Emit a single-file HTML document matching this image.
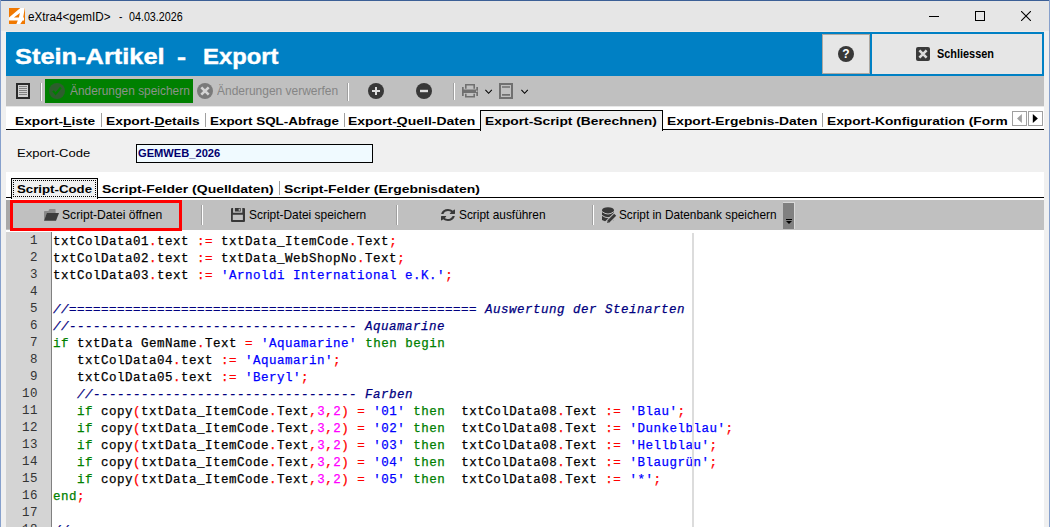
<!DOCTYPE html>
<html><head><meta charset="utf-8"><style>
html,body{margin:0;padding:0;}
body{width:1050px;height:527px;position:relative;overflow:hidden;background:#f0f0f0;font-family:"Liberation Sans",sans-serif;}
.a{position:absolute;box-sizing:border-box;}
.tx{position:absolute;white-space:pre;line-height:1;transform-origin:0 0;}
.tx u{text-decoration:underline;text-underline-offset:1px;}
.code{position:absolute;left:53px;white-space:pre;font-family:"Liberation Mono",monospace;font-size:12.5px;letter-spacing:0.5px;line-height:17px;color:#000;-webkit-text-stroke:0.25px currentColor;}
.ln{position:absolute;left:6px;width:32px;text-align:right;white-space:pre;font-family:"Liberation Mono",monospace;font-size:12.5px;letter-spacing:0.5px;line-height:17px;color:#333;}
.p{color:#ff0000}
.s{color:#0000ff}
.c{color:#000080;font-style:italic}
.k{color:#008000}
.n{color:#ff00ff}

</style></head><body>
<!-- window border -->
<div class="a" style="left:0;top:0;width:1050px;height:1px;background:#3b5f96"></div>
<div class="a" style="left:0;top:0;width:1px;height:527px;background:#86a0cc"></div>
<div class="a" style="left:1049px;top:0;width:1px;height:527px;background:#86a0cc"></div>
<!-- title bar -->
<div class="a" style="left:1px;top:1px;width:1048px;height:30px;background:#e6e6e6"></div>
<svg class="a" style="left:9px;top:8px" width="16" height="16" viewBox="0 0 16 16"><rect width="16" height="16" fill="#f07800"/><path fill="#fff" fill-rule="evenodd" d="M0,9.4 L11.3,0 L15.8,0 L14.2,9.4 L15,9.4 L15,12.6 L13.6,12.6 L11.3,16 L7.4,16 L8.8,12.6 L0,12.6 Z M4.9,9.4 L10.9,4.9 L9.9,9.4 Z"/></svg>
<div class="a" style="left:929px;top:16px;width:10px;height:1px;background:#000"></div>
<div class="a" style="left:975px;top:11px;width:10px;height:10px;border:1px solid #000"></div>
<svg class="a" style="left:1021px;top:11px" width="10" height="10" viewBox="0 0 10 10"><path d="M0,0 L10,10 M10,0 L0,10" stroke="#000" stroke-width="1.1"/></svg>
<!-- header -->
<div class="a" style="left:6px;top:31px;width:1038px;height:1px;background:#f0eae7"></div>
<div class="a" style="left:6px;top:32px;width:1038px;height:44px;background:#0080c4"></div>
<div class="a" style="left:822px;top:34px;width:48px;height:40px;background:#e6e6e6;border:1px solid #b0a8a0"></div>
<svg class="a" style="left:838px;top:46px" width="16" height="16" viewBox="0 0 16 16"><circle cx="8" cy="8" r="8" fill="#383838"/><text x="8" y="12.3" text-anchor="middle" font-family="Liberation Sans" font-weight="bold" font-size="12" fill="#fff">?</text></svg>
<div class="a" style="left:870px;top:32px;width:174px;height:44px;background:#e6e6e6;border:2px solid #0080c4"></div>
<svg class="a" style="left:916px;top:47px" width="14" height="14" viewBox="0 0 14 14"><rect width="14" height="14" rx="2" fill="#3a3a3a"/><path d="M3.4,3.4 L10.6,10.6 M10.6,3.4 L3.4,10.6" stroke="#dcdcdc" stroke-width="2.6"/></svg>
<!-- toolbar -->
<div class="a" style="left:6px;top:76px;width:1038px;height:30px;background:#c0c0c0"></div>
<div class="a" style="left:6px;top:106px;width:1038px;height:1px;background:#e8e8e8"></div>
<div class="a" style="left:16px;top:83px;width:14px;height:16px;border:2px solid #2a2a2a;background:#d0d0d0"></div>
<svg class="a" style="left:18px;top:85px" width="10" height="12" viewBox="0 0 10 12"><path d="M1,1.5H9M1,3.5H9M1,5.5H9M1,7.5H9M1,9.5H9" stroke="#787878" stroke-width="0.9"/></svg>
<div class="a" style="left:40px;top:83px;width:1px;height:18px;background:#a0a0a0"></div>
<div class="a" style="left:41px;top:83px;width:1px;height:18px;background:#fff"></div>
<div class="a" style="left:45px;top:79px;width:148px;height:24px;background:#008000"></div>
<svg class="a" style="left:49px;top:83px" width="16" height="16" viewBox="0 0 16 16"><circle cx="8" cy="8" r="8" fill="#2d5e2d"/><path d="M4.1,7.9 L6.6,10.9 L11.9,4.5" stroke="#008000" stroke-width="2.2" fill="none"/></svg>
<svg class="a" style="left:197px;top:83px" width="16" height="16" viewBox="0 0 16 16"><circle cx="8" cy="8" r="8" fill="#7a7a7a"/><path d="M4.3,4.3 L11.7,11.7 M11.7,4.3 L4.3,11.7" stroke="#d4d4d4" stroke-width="2.6"/></svg>
<div class="a" style="left:347px;top:83px;width:1px;height:18px;background:#a0a0a0"></div>
<div class="a" style="left:348px;top:83px;width:1px;height:18px;background:#fff"></div>
<svg class="a" style="left:368px;top:83px" width="16" height="16" viewBox="0 0 16 16"><circle cx="8" cy="8" r="8" fill="#383838"/><path d="M8,4V12M4,8H12" stroke="#dcdcdc" stroke-width="2"/></svg>
<svg class="a" style="left:416px;top:83px" width="16" height="16" viewBox="0 0 16 16"><circle cx="8" cy="8" r="8" fill="#383838"/><path d="M4,8H12" stroke="#dcdcdc" stroke-width="2.4"/></svg>
<div class="a" style="left:453px;top:83px;width:1px;height:17px;background:#a0a0a0"></div>
<div class="a" style="left:454px;top:83px;width:1px;height:17px;background:#fff"></div>
<svg class="a" style="left:462px;top:84px" width="16" height="14" viewBox="0 0 16 14"><path fill="#707070" d="M3,0H13V4.8H11.4V1.6H4.6V4.8H3Z M0,3H1.7V12H0Z M14.3,3H16V12H14.3Z M0,5.5H16V9H0Z M3,9.7H4.6V12H11.4V9.7H13V13.6H3Z"/><rect x="14.2" y="6.6" width="1.2" height="1.2" fill="#e0e0e0"/></svg>
<svg class="a" style="left:485px;top:89px" width="8" height="6" viewBox="0 0 8 6"><path d="M0.4,0.9 L3.6,4.3 L6.8,0.9" stroke="#000" stroke-width="1.05" fill="none"/></svg>
<svg class="a" style="left:499px;top:83px" width="14" height="16" viewBox="0 0 14 16"><path fill="#707070" fill-rule="evenodd" d="M0,0H14V16H0Z M2,2V14H12V2Z M3,3.2H11V4.8H3Z M3,11.1H11V12.7H3Z"/></svg>
<svg class="a" style="left:521px;top:89px" width="8" height="6" viewBox="0 0 8 6"><path d="M0.4,0.9 L3.6,4.3 L6.8,0.9" stroke="#000" stroke-width="1.05" fill="none"/></svg>
<!-- tab strip -->
<div class="a" style="left:6px;top:107px;width:1038px;height:23px;background:#fff"></div>
<div class="a" style="left:6px;top:129px;width:1038px;height:1px;background:#000"></div>
<div class="a" style="left:101px;top:113px;width:1px;height:14px;background:#a0a0a0"></div>
<div class="a" style="left:205px;top:113px;width:1px;height:14px;background:#a0a0a0"></div>
<div class="a" style="left:344px;top:113px;width:1px;height:14px;background:#a0a0a0"></div>
<div class="a" style="left:822px;top:113px;width:1px;height:14px;background:#a0a0a0"></div>
<div class="a" style="left:480px;top:110px;width:183px;height:21px;background:#f0f0f0;border:1px solid #000;border-bottom:none"></div>
<div class="a" style="left:1012px;top:111px;width:15px;height:15px;background:#fff;border:1px solid #a0a0a0"></div>
<div class="a" style="left:1028px;top:111px;width:15px;height:15px;background:#fff;border:1px solid #a0a0a0"></div>
<svg class="a" style="left:1012px;top:111px" width="15" height="15" viewBox="0 0 15 15"><path d="M9.9,3 L5,7.5 L9.9,12Z" fill="#a0a0a0"/></svg>
<svg class="a" style="left:1028px;top:111px" width="15" height="15" viewBox="0 0 15 15"><path d="M4.8,3 L9.9,7.5 L4.8,12Z" fill="#000"/></svg>
<!-- export code -->
<div class="a" style="left:136px;top:144px;width:237px;height:19px;background:#f0faff;border:1px solid #000"></div>
<!-- subtabs -->
<div class="a" style="left:6px;top:172px;width:1038px;height:28px;background:#fff"></div>
<div class="a" style="left:6px;top:197px;width:1038px;height:1px;background:#000"></div>
<div class="a" style="left:11px;top:178px;width:87px;height:21px;background:#f0f0f0;border:1px solid #000;border-bottom:none"></div>
<div class="a" style="left:13px;top:180px;width:83px;height:17px;border:1px dotted #000"></div>
<div class="a" style="left:279px;top:181px;width:1px;height:14px;background:#a0a0a0"></div>
<!-- button toolbar -->
<div class="a" style="left:6px;top:200px;width:1038px;height:30px;background:#c0c0c0"></div>
<div class="a" style="left:6px;top:200px;width:4px;height:29px;background:#a8a8a8"></div>
<div class="a" style="left:10px;top:200px;width:172px;height:31px;border:3px solid #ff0000;z-index:5"></div>
<svg class="a" style="left:44px;top:209px" width="15" height="12" viewBox="0 0 15 12"><path fill="#8a8a8a" d="M0,2.5 Q0,2 1,2 H4.5 L5,0.5 Q5.3,0 6,0 H11 Q11.6,0 11.6,0.8 V4 H3 L0,11.5Z"/><path fill="#3c3c3c" d="M2.8,4 H15 L12,11.8 H0Z"/></svg>
<div class="a" style="left:201px;top:205px;width:1px;height:20px;background:#a0a0a0"></div>
<div class="a" style="left:202px;top:205px;width:1px;height:20px;background:#fff"></div>
<svg class="a" style="left:231px;top:208px" width="14" height="14" viewBox="0 0 14 14"><path fill="#383838" fill-rule="evenodd" d="M1,0 H2.1 V4.8 H11.3 V0 H13 Q14,0 14,1 V13 Q14,14 13,14 H1 Q0,14 0,13 V1 Q0,0 1,0Z M1.8,6.7 V12 H11.9 V6.7Z"/><path fill="#383838" fill-rule="evenodd" d="M3.9,0 H9.7 V3.6 H3.9Z M7.7,0.7 V2.8 H8.9 V0.7Z"/></svg>
<div class="a" style="left:396px;top:205px;width:1px;height:20px;background:#a0a0a0"></div>
<div class="a" style="left:397px;top:205px;width:1px;height:20px;background:#fff"></div>
<svg class="a" style="left:441px;top:209px" width="14" height="12" viewBox="0 0 1536 1536" preserveAspectRatio="none"><path fill="#383838" d="M1511 928q0 5-1 7-64 268-268 434.5t-478 166.5q-146 0-282.5-55t-243.5-157l-129 129q-19 19-45 19t-45-19-19-45v-448q0-26 19-45t45-19h448q26 0 45 19t19 45-19 45l-137 137q71 66 161 102t187 36q134 0 250-65t186-179q11-17 53-117 8-23 30-23h192q13 0 22.5 9.5t9.5 22.5zm25-800v448q0 26-19 45t-45 19h-448q-26 0-45-19t-19-45 19-45l138-138q-148-137-349-137-134 0-250 65t-186 179q-11 17-53 117-8 23-30 23h-199q-13 0-22.5-9.5t-9.5-22.5v-7q65-268 270-434.5t480-166.5q146 0 284 55.5t245 156.5l130-129q19-19 45-19t45 19 19 45z"/></svg>
<div class="a" style="left:592px;top:205px;width:1px;height:20px;background:#a0a0a0"></div>
<div class="a" style="left:593px;top:205px;width:1px;height:20px;background:#fff"></div>
<svg class="a" style="left:601px;top:207px" width="16" height="17" viewBox="0 0 16 17"><path fill="#383838" d="M1,3.2 A6,3 0 0 1 13,3.2 V13 Q7,16.5 1,13Z"/><path d="M1,4.6 Q7,9.4 13,4.6 M1,8.4 Q7,13 13,8.4" stroke="#c0c0c0" stroke-width="1" fill="none"/><path d="M5.6,16.6 L15.6,6.6" stroke="#c0c0c0" stroke-width="5"/><path d="M7.4,14.6 L14.2,7.8" stroke="#383838" stroke-width="2.8"/><path d="M6,16 L6.8,13.4 L8.6,15.2Z" fill="#383838"/></svg>
<div class="a" style="left:783px;top:202px;width:12px;height:27px;background:#808080;border-top:1px solid #d8d8d8;border-right:1px solid #d8d8d8"></div>
<svg class="a" style="left:785px;top:218px" width="8" height="8" viewBox="0 0 8 8"><path d="M1,1.5H7" stroke="#000" stroke-width="1"/><path d="M1,3 H7 L4,6Z" fill="#000"/></svg>
<!-- editor -->
<div class="a" style="left:6px;top:230px;width:1038px;height:297px;background:#fff"></div>
<div class="a" style="left:6px;top:232px;width:45px;height:295px;background:#d4d4d4"></div>
<div class="a" style="left:51px;top:232px;width:1px;height:295px;background:#808080"></div>
<div class=ln style='top:233px'>1</div>
<div class=code style='top:234px'>txtColData01<span class=p>.</span>text <span class=p>:=</span> txtData_ItemCode<span class=p>.</span>Text<span class=p>;</span></div>
<div class=ln style='top:250px'>2</div>
<div class=code style='top:251px'>txtColData02<span class=p>.</span>text <span class=p>:=</span> txtData_WebShopNo<span class=p>.</span>Text<span class=p>;</span></div>
<div class=ln style='top:267px'>3</div>
<div class=code style='top:268px'>txtColData03<span class=p>.</span>text <span class=p>:=</span> <span class=s>&#x27;Arnoldi International e.K.&#x27;</span><span class=p>;</span></div>
<div class=ln style='top:284px'>4</div>
<div class=ln style='top:301px'>5</div>
<div class=code style='top:302px'><span class=c>//=================================================== Auswertung der Steinarten</span></div>
<div class=ln style='top:318px'>6</div>
<div class=code style='top:319px'><span class=c>//------------------------------------ Aquamarine</span></div>
<div class=ln style='top:335px'>7</div>
<div class=code style='top:336px'><span class=k>if</span> txtData GemName<span class=p>.</span>Text <span class=p>=</span> <span class=s>&#x27;Aquamarine&#x27;</span> <span class=k>then</span> <span class=k>begin</span></div>
<div class=ln style='top:352px'>8</div>
<div class=code style='top:353px'>   txtColData04<span class=p>.</span>text <span class=p>:=</span> <span class=s>&#x27;Aquamarin&#x27;</span><span class=p>;</span></div>
<div class=ln style='top:369px'>9</div>
<div class=code style='top:370px'>   txtColData05<span class=p>.</span>text <span class=p>:=</span> <span class=s>&#x27;Beryl&#x27;</span><span class=p>;</span></div>
<div class=ln style='top:386px'>10</div>
<div class=code style='top:387px'>   <span class=c>//--------------------------------- Farben</span></div>
<div class=ln style='top:403px'>11</div>
<div class=code style='top:404px'>   <span class=k>if</span> copy<span class=p>(</span>txtData_ItemCode<span class=p>.</span>Text<span class=p>,</span><span class=n>3</span><span class=p>,</span><span class=n>2</span><span class=p>)</span> <span class=p>=</span> <span class=s>&#x27;01&#x27;</span> <span class=k>then</span>  txtColData08<span class=p>.</span>Text <span class=p>:=</span> <span class=s>&#x27;Blau&#x27;</span><span class=p>;</span></div>
<div class=ln style='top:420px'>12</div>
<div class=code style='top:421px'>   <span class=k>if</span> copy<span class=p>(</span>txtData_ItemCode<span class=p>.</span>Text<span class=p>,</span><span class=n>3</span><span class=p>,</span><span class=n>2</span><span class=p>)</span> <span class=p>=</span> <span class=s>&#x27;02&#x27;</span> <span class=k>then</span>  txtColData08<span class=p>.</span>Text <span class=p>:=</span> <span class=s>&#x27;Dunkelblau&#x27;</span><span class=p>;</span></div>
<div class=ln style='top:437px'>13</div>
<div class=code style='top:438px'>   <span class=k>if</span> copy<span class=p>(</span>txtData_ItemCode<span class=p>.</span>Text<span class=p>,</span><span class=n>3</span><span class=p>,</span><span class=n>2</span><span class=p>)</span> <span class=p>=</span> <span class=s>&#x27;03&#x27;</span> <span class=k>then</span>  txtColData08<span class=p>.</span>Text <span class=p>:=</span> <span class=s>&#x27;Hellblau&#x27;</span><span class=p>;</span></div>
<div class=ln style='top:454px'>14</div>
<div class=code style='top:455px'>   <span class=k>if</span> copy<span class=p>(</span>txtData_ItemCode<span class=p>.</span>Text<span class=p>,</span><span class=n>3</span><span class=p>,</span><span class=n>2</span><span class=p>)</span> <span class=p>=</span> <span class=s>&#x27;04&#x27;</span> <span class=k>then</span>  txtColData08<span class=p>.</span>Text <span class=p>:=</span> <span class=s>&#x27;Blaugrün&#x27;</span><span class=p>;</span></div>
<div class=ln style='top:471px'>15</div>
<div class=code style='top:472px'>   <span class=k>if</span> copy<span class=p>(</span>txtData_ItemCode<span class=p>.</span>Text<span class=p>,</span><span class=n>3</span><span class=p>,</span><span class=n>2</span><span class=p>)</span> <span class=p>=</span> <span class=s>&#x27;05&#x27;</span> <span class=k>then</span>  txtColData08<span class=p>.</span>Text <span class=p>:=</span> <span class=s>&#x27;*&#x27;</span><span class=p>;</span></div>
<div class=ln style='top:488px'>16</div>
<div class=code style='top:489px'><span class=k>end</span><span class=p>;</span></div>
<div class=ln style='top:505px'>17</div>
<div class=ln style='top:522px'>18</div>
<div class=code style='top:523px'><span class=c>//----------------------------------------</span></div>
<div class='a' style='left:692px;top:233px;width:2px;height:294px;background:#dcdcdc'></div>
<span class='tx' style='left:28.20px;top:11.00px;font-family:"Liberation Sans";font-size:12px;font-weight:normal;color:#000;transform:scaleX(0.9738);'>eXtra4&lt;gemID&gt;</span>
<span class='tx' style='left:119.10px;top:11.00px;font-family:"Liberation Sans";font-size:12px;font-weight:normal;color:#000;transform:scaleX(0.8500);'>-</span>
<span class='tx' style='left:128.90px;top:11.00px;font-family:"Liberation Sans";font-size:12px;font-weight:normal;color:#000;transform:scaleX(0.8933);'>04.03.2026</span>
<span class='tx' style='left:14.84px;top:46.00px;font-family:"Liberation Sans";font-size:22px;font-weight:bold;color:#fff;transform:scaleX(1.1551);-webkit-text-stroke:0.4px #fff;'>Stein-Artikel</span>
<span class='tx' style='left:177.47px;top:46.00px;font-family:"Liberation Sans";font-size:22px;font-weight:bold;color:#fff;transform:scaleX(1.2333);-webkit-text-stroke:0.4px #fff;'>-</span>
<span class='tx' style='left:202.92px;top:46.00px;font-family:"Liberation Sans";font-size:22px;font-weight:bold;color:#fff;transform:scaleX(1.0826);-webkit-text-stroke:0.4px #fff;'>Export</span>
<span class='tx' style='left:937.13px;top:47.50px;font-family:"Liberation Sans";font-size:12.5px;font-weight:bold;color:#000;transform:scaleX(0.8719);'>Schliessen</span>
<span class='tx' style='left:69.50px;top:84.00px;font-family:"Liberation Sans";font-size:13px;font-weight:normal;color:#8a928a;transform:scaleX(0.9154);'>Änderungen speichern</span>
<span class='tx' style='left:216.70px;top:84.00px;font-family:"Liberation Sans";font-size:13px;font-weight:normal;color:#858585;transform:scaleX(0.9206);'>Änderungen verwerfen</span>
<span class='tx' style='left:15.41px;top:115.60px;font-family:"Liberation Sans";font-size:11.5px;font-weight:bold;color:#000;transform:scaleX(1.1939);'>Export-<u>L</u>iste</span>
<span class='tx' style='left:105.50px;top:115.60px;font-family:"Liberation Sans";font-size:11.5px;font-weight:bold;color:#000;transform:scaleX(1.2026);'>Export-<u>D</u>etails</span>
<span class='tx' style='left:209.73px;top:115.60px;font-family:"Liberation Sans";font-size:11.5px;font-weight:bold;color:#000;transform:scaleX(1.1670);'>Export SQL-Abfrage</span>
<span class='tx' style='left:347.79px;top:115.60px;font-family:"Liberation Sans";font-size:11.5px;font-weight:bold;color:#000;transform:scaleX(1.2136);'>Export-<u>Q</u>uell-Daten</span>
<span class='tx' style='left:484.80px;top:115.60px;font-family:"Liberation Sans";font-size:11.5px;font-weight:bold;color:#000;transform:scaleX(1.2000);'>Export-Script (Berechnen)</span>
<span class='tx' style='left:666.80px;top:115.60px;font-family:"Liberation Sans";font-size:11.5px;font-weight:bold;color:#000;transform:scaleX(1.2016);'>Export-Ergebnis-Daten</span>
<span class='tx' style='left:826.81px;top:115.60px;font-family:"Liberation Sans";font-size:11.5px;font-weight:bold;color:#000;transform:scaleX(1.1933);'>Export-Konfiguration (Form</span>
<span class='tx' style='left:17.27px;top:147.80px;font-family:"Liberation Sans";font-size:11.5px;font-weight:normal;color:#000;transform:scaleX(1.1349);'>Export-Code</span>
<span class='tx' style='left:138.30px;top:148.00px;font-family:"Liberation Sans";font-size:11.5px;font-weight:bold;color:#00006e;transform:scaleX(0.9671);'>GEMWEB_2026</span>
<span class='tx' style='left:16.60px;top:184.20px;font-family:"Liberation Sans";font-size:11.5px;font-weight:bold;color:#000;transform:scaleX(1.1508);'>Script-Code</span>
<span class='tx' style='left:102.20px;top:184.20px;font-family:"Liberation Sans";font-size:11.5px;font-weight:bold;color:#000;transform:scaleX(1.2156);'>Script-Felder (Quelldaten)</span>
<span class='tx' style='left:284.30px;top:184.20px;font-family:"Liberation Sans";font-size:11.5px;font-weight:bold;color:#000;transform:scaleX(1.2112);'>Script-Felder (Ergebnisdaten)</span>
<span class='tx' style='left:62.37px;top:208.20px;font-family:"Liberation Sans";font-size:13px;font-weight:normal;color:#000;transform:scaleX(0.9330);'>Script-Datei öffnen</span>
<span class='tx' style='left:249.08px;top:208.20px;font-family:"Liberation Sans";font-size:13px;font-weight:normal;color:#000;transform:scaleX(0.9167);'>Script-Datei speichern</span>
<span class='tx' style='left:459.29px;top:208.20px;font-family:"Liberation Sans";font-size:13px;font-weight:normal;color:#000;transform:scaleX(0.9140);'>Script ausführen</span>
<span class='tx' style='left:619.09px;top:208.20px;font-family:"Liberation Sans";font-size:13px;font-weight:normal;color:#000;transform:scaleX(0.9081);'>Script in Datenbank speichern</span>
</body></html>
